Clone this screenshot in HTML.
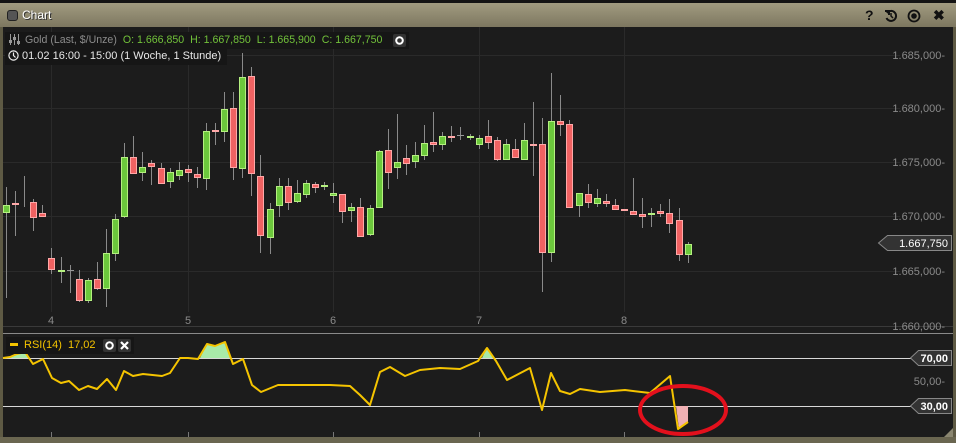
<!DOCTYPE html>
<html><head><meta charset="utf-8"><style>
*{margin:0;padding:0}
body{width:956px;height:443px;background:#1c1c1c;overflow:hidden;position:relative;font-family:"Liberation Sans",sans-serif}
#tb{position:absolute;left:0;top:3px;width:956px;height:24px;background:linear-gradient(#a19b80,#7d7760)}
#top{position:absolute;left:0;top:0;width:956px;height:3px;background:#141414}
#tb .cb{position:absolute;left:7px;top:7px;width:9px;height:9px;border:1px solid #222;border-radius:3px;background:#555}
#tb .t{position:absolute;left:22px;top:5px;font-size:12px;color:#fff;text-shadow:1px 1px 0 #333}
#tb .ic{position:absolute;top:4px;font-size:14px;font-weight:bold;color:#111}
svg{position:absolute;left:0;top:0}
.info{position:absolute;background:#161616;font-size:11px;height:17px;line-height:17px;white-space:nowrap}
.btn{position:absolute;width:13px;height:13px;background:#333;border-radius:2px}
.g{color:#72c23a;margin-left:6px}
</style></head><body>
<div id="top"></div>
<div id="tb"><div class="cb"></div><div class="t">Chart</div>
<div class="ic" style="left:865px">?</div>
<svg style="left:884px;top:6px" width="14" height="14" viewBox="0 0 14 14"><path d="M3 4 A5 5 0 1 1 2.5 9" fill="none" stroke="#111" stroke-width="2"/><path d="M1 2 L5 2 L5 6" fill="none" stroke="#111" stroke-width="2"/><path d="M7 4 V7 L9 9" fill="none" stroke="#111" stroke-width="1.5"/></svg>
<svg style="left:907px;top:6px" width="14" height="14" viewBox="0 0 14 14"><circle cx="7" cy="7" r="5.5" fill="none" stroke="#111" stroke-width="1.8"/><circle cx="7" cy="7" r="2.8" fill="#111"/></svg>
<div class="ic" style="left:933px">&#x2716;</div>
</div>
<svg width="956" height="443" viewBox="0 0 956 443">
<rect x="0" y="27" width="3" height="416" fill="#5e5a44"/>
<rect x="953" y="27" width="3" height="416" fill="#5e5a44"/>
<rect x="0" y="437" width="956" height="6" fill="#6a6650"/>
<g stroke="#2a2a2a" stroke-width="1">
<line x1="3" y1="55.5" x2="900" y2="55.5"/><line x1="3" y1="108.5" x2="900" y2="108.5"/><line x1="3" y1="162.5" x2="900" y2="162.5"/><line x1="3" y1="216.5" x2="900" y2="216.5"/><line x1="3" y1="271.5" x2="900" y2="271.5"/>
<line x1="51.5" y1="27" x2="51.5" y2="312"/><line x1="188.5" y1="27" x2="188.5" y2="312"/><line x1="333.5" y1="27" x2="333.5" y2="312"/><line x1="479.5" y1="27" x2="479.5" y2="312"/><line x1="624.5" y1="27" x2="624.5" y2="312"/>
</g>
<line x1="3" y1="326.5" x2="953" y2="326.5" stroke="#3a3a3a"/>
<line x1="3" y1="333.5" x2="953" y2="333.5" stroke="#8a8a8a"/>
<g fill="#8a8a8a" font-size="11" text-anchor="end">
<text x="945" y="59">1.685,000-</text><text x="945" y="112">1.680,000-</text><text x="945" y="166">1.675,000-</text><text x="945" y="220">1.670,000-</text><text x="945" y="275">1.665,000-</text><text x="945" y="330">1.660,000-</text>
<text x="945" y="385">50,00-</text>
</g>
<g fill="#8a8a8a" font-size="11" text-anchor="middle"><text x="51" y="324">4</text><text x="188" y="324">5</text><text x="333" y="324">6</text><text x="479" y="324">7</text><text x="624" y="324">8</text></g>
<g stroke="#777"><line x1="51.5" y1="432" x2="51.5" y2="437"/><line x1="188.5" y1="432" x2="188.5" y2="437"/><line x1="333.5" y1="432" x2="333.5" y2="437"/><line x1="479.5" y1="432" x2="479.5" y2="437"/><line x1="624.5" y1="432" x2="624.5" y2="437"/></g>
<g stroke="#8a8a8a" stroke-width="1">
<line x1="6.5" y1="187" x2="6.5" y2="298"/><line x1="15.5" y1="191" x2="15.5" y2="236"/><line x1="24.5" y1="176" x2="24.5" y2="207"/><line x1="33.5" y1="199" x2="33.5" y2="231"/><line x1="42.5" y1="205" x2="42.5" y2="216"/><line x1="51.5" y1="248" x2="51.5" y2="274"/><line x1="61.5" y1="257" x2="61.5" y2="283"/><line x1="70.5" y1="265" x2="70.5" y2="293"/><line x1="79.5" y1="270" x2="79.5" y2="302"/><line x1="88.5" y1="278" x2="88.5" y2="303"/><line x1="97.5" y1="262" x2="97.5" y2="290"/><line x1="106.5" y1="229" x2="106.5" y2="307"/><line x1="115.5" y1="214" x2="115.5" y2="261"/><line x1="124.5" y1="143" x2="124.5" y2="218"/><line x1="133.5" y1="136" x2="133.5" y2="174"/><line x1="142.5" y1="152" x2="142.5" y2="181"/><line x1="151.5" y1="160" x2="151.5" y2="185"/><line x1="161.5" y1="163" x2="161.5" y2="183"/><line x1="170.5" y1="168" x2="170.5" y2="188"/><line x1="179.5" y1="162" x2="179.5" y2="180"/><line x1="188.5" y1="165" x2="188.5" y2="182"/><line x1="197.5" y1="167" x2="197.5" y2="188"/><line x1="206.5" y1="123" x2="206.5" y2="190"/><line x1="215.5" y1="123" x2="215.5" y2="145"/><line x1="224.5" y1="92" x2="224.5" y2="142"/><line x1="233.5" y1="92" x2="233.5" y2="180"/><line x1="242.5" y1="53" x2="242.5" y2="178"/><line x1="251.5" y1="67" x2="251.5" y2="196"/><line x1="260.5" y1="155" x2="260.5" y2="253"/><line x1="270.5" y1="203" x2="270.5" y2="254"/><line x1="279.5" y1="178" x2="279.5" y2="217"/><line x1="288.5" y1="178" x2="288.5" y2="210"/><line x1="297.5" y1="180" x2="297.5" y2="203"/><line x1="306.5" y1="180" x2="306.5" y2="198"/><line x1="315.5" y1="182" x2="315.5" y2="193"/><line x1="324.5" y1="182" x2="324.5" y2="190"/><line x1="333.5" y1="183" x2="333.5" y2="203"/><line x1="342.5" y1="194" x2="342.5" y2="223"/><line x1="351.5" y1="203" x2="351.5" y2="222"/><line x1="360.5" y1="198" x2="360.5" y2="237"/><line x1="370.5" y1="205" x2="370.5" y2="236"/><line x1="379.5" y1="150" x2="379.5" y2="208"/><line x1="388.5" y1="129" x2="388.5" y2="189"/><line x1="397.5" y1="114" x2="397.5" y2="179"/><line x1="406.5" y1="145" x2="406.5" y2="175"/><line x1="415.5" y1="142" x2="415.5" y2="168"/><line x1="424.5" y1="125" x2="424.5" y2="160"/><line x1="433.5" y1="112" x2="433.5" y2="152"/><line x1="442.5" y1="132" x2="442.5" y2="150"/><line x1="451.5" y1="126" x2="451.5" y2="142"/><line x1="460.5" y1="127" x2="460.5" y2="140"/><line x1="470.5" y1="134" x2="470.5" y2="140"/><line x1="479.5" y1="135" x2="479.5" y2="149"/><line x1="488.5" y1="120" x2="488.5" y2="149"/><line x1="497.5" y1="137" x2="497.5" y2="161"/><line x1="506.5" y1="139" x2="506.5" y2="160"/><line x1="515.5" y1="139" x2="515.5" y2="158"/><line x1="524.5" y1="123" x2="524.5" y2="160"/><line x1="533.5" y1="102" x2="533.5" y2="176"/><line x1="542.5" y1="118" x2="542.5" y2="292"/><line x1="551.5" y1="73" x2="551.5" y2="262"/><line x1="560.5" y1="95" x2="560.5" y2="136"/><line x1="569.5" y1="120" x2="569.5" y2="207"/><line x1="579.5" y1="193" x2="579.5" y2="217"/><line x1="588.5" y1="184" x2="588.5" y2="208"/><line x1="597.5" y1="189" x2="597.5" y2="207"/><line x1="606.5" y1="194" x2="606.5" y2="207"/><line x1="615.5" y1="199" x2="615.5" y2="210"/><line x1="633.5" y1="178" x2="633.5" y2="214"/><line x1="642.5" y1="198" x2="642.5" y2="228"/><line x1="651.5" y1="208" x2="651.5" y2="227"/><line x1="660.5" y1="204" x2="660.5" y2="217"/><line x1="669.5" y1="199" x2="669.5" y2="233"/><line x1="679.5" y1="208" x2="679.5" y2="261"/><line x1="688.5" y1="242" x2="688.5" y2="263"/>
</g>
<g fill="#6cc83c" stroke="#b5f080" stroke-width="1">
<rect x="3.5" y="205.5" width="6" height="7"/><rect x="58.5" y="270.5" width="6" height="1"/><rect x="85.5" y="280.5" width="6" height="20"/><rect x="103.5" y="253.5" width="6" height="35"/><rect x="112.5" y="219.5" width="6" height="34"/><rect x="121.5" y="157.5" width="6" height="59"/><rect x="139.5" y="167.5" width="6" height="5"/><rect x="167.5" y="172.5" width="6" height="9"/><rect x="176.5" y="170.5" width="6" height="5"/><rect x="203.5" y="131.5" width="6" height="47"/><rect x="221.5" y="109.5" width="6" height="22"/><rect x="239.5" y="77.5" width="6" height="91"/><rect x="267.5" y="209.5" width="6" height="28"/><rect x="276.5" y="186.5" width="6" height="19"/><rect x="294.5" y="193.5" width="6" height="8"/><rect x="303.5" y="183.5" width="6" height="11"/><rect x="321.5" y="185.5" width="6" height="1"/><rect x="330.5" y="193.5" width="6" height="2"/><rect x="348.5" y="207.5" width="6" height="3"/><rect x="367.5" y="208.5" width="6" height="26"/><rect x="376.5" y="151.5" width="6" height="56"/><rect x="394.5" y="162.5" width="6" height="5"/><rect x="412.5" y="155.5" width="6" height="6"/><rect x="421.5" y="143.5" width="6" height="12"/><rect x="439.5" y="136.5" width="6" height="8"/><rect x="467.5" y="136.5" width="6" height="1"/><rect x="476.5" y="138.5" width="6" height="6"/><rect x="503.5" y="144.5" width="6" height="15"/><rect x="521.5" y="140.5" width="6" height="19"/><rect x="548.5" y="121.5" width="6" height="131"/><rect x="576.5" y="193.5" width="6" height="12"/><rect x="594.5" y="198.5" width="6" height="5"/><rect x="648.5" y="213.5" width="6" height="1"/><rect x="685.5" y="244.5" width="6" height="10"/>
</g>
<g fill="#f06262" stroke="#ffa8a8" stroke-width="1">
<rect x="12.5" y="203.5" width="6" height="1"/><rect x="30.5" y="202.5" width="6" height="15"/><rect x="39.5" y="213.5" width="6" height="3"/><rect x="48.5" y="258.5" width="6" height="11"/><rect x="76.5" y="279.5" width="6" height="21"/><rect x="94.5" y="279.5" width="6" height="9"/><rect x="130.5" y="157.5" width="6" height="16"/><rect x="148.5" y="163.5" width="6" height="3"/><rect x="158.5" y="168.5" width="6" height="15"/><rect x="185.5" y="169.5" width="6" height="3"/><rect x="194.5" y="174.5" width="6" height="3"/><rect x="212.5" y="130.5" width="6" height="1"/><rect x="230.5" y="108.5" width="6" height="59"/><rect x="248.5" y="76.5" width="6" height="97"/><rect x="257.5" y="176.5" width="6" height="59"/><rect x="285.5" y="186.5" width="6" height="16"/><rect x="312.5" y="184.5" width="6" height="3"/><rect x="339.5" y="194.5" width="6" height="17"/><rect x="357.5" y="207.5" width="6" height="29"/><rect x="385.5" y="150.5" width="6" height="22"/><rect x="403.5" y="158.5" width="6" height="5"/><rect x="430.5" y="142.5" width="6" height="2"/><rect x="448.5" y="136.5" width="6" height="1"/><rect x="485.5" y="136.5" width="6" height="6"/><rect x="494.5" y="140.5" width="6" height="19"/><rect x="512.5" y="149.5" width="6" height="8"/><rect x="530.5" y="144.5" width="6" height="1"/><rect x="539.5" y="144.5" width="6" height="108"/><rect x="557.5" y="121.5" width="6" height="3"/><rect x="566.5" y="124.5" width="6" height="83"/><rect x="585.5" y="194.5" width="6" height="8"/><rect x="603.5" y="201.5" width="6" height="2"/><rect x="612.5" y="205.5" width="6" height="4"/><rect x="621.5" y="209.5" width="6" height="1"/><rect x="630.5" y="211.5" width="6" height="3"/><rect x="639.5" y="214.5" width="6" height="2"/><rect x="657.5" y="211.5" width="6" height="2"/><rect x="666.5" y="213.5" width="6" height="10"/><rect x="676.5" y="220.5" width="6" height="34"/>
</g>
<rect x="67" y="270" width="7" height="1" fill="#999"/><rect x="457" y="135" width="7" height="1" fill="#999"/>
<g fill="#333" stroke="#888"><path d="M878.5 243 L887.5 235.5 H951.5 V250.5 H887.5 Z"/></g>
<text x="948" y="247" fill="#fff" font-size="11" text-anchor="end">1.667,750</text>
<line x1="3" y1="358.5" x2="912" y2="358.5" stroke="#d8d8d8"/>
<line x1="3" y1="406.5" x2="912" y2="406.5" stroke="#d8d8d8"/>
<g fill="#333" stroke="#888"><path d="M910.5 358 L918.5 350.5 H951.5 V365.5 H918.5 Z"/><path d="M910.5 406 L918.5 398.5 H951.5 V413.5 H918.5 Z"/></g>
<g fill="#fff" font-size="11" font-weight="bold" text-anchor="end"><text x="948" y="362">70,00</text><text x="948" y="410">30,00</text></g>
<g fill="#a8eaa8"><path d="M10 358 L17 354 L25 352 L30 358 Z"/><path d="M200 358 L207 344 L215 346 L225 342 L230 358 Z"/><path d="M482 358 L487 348 L493 358 Z"/></g>
<path d="M676 406 L679 429 L688 422 L688 406 Z" fill="#f0b0b4"/>
<polyline fill="none" stroke="#f5c400" stroke-width="2" stroke-linejoin="round" points="3,358 10,357 17,354 25,352 33,364 43,359 52,378 61,383 69,381 79,390 88,386 97,389 107,379 116,390 124,371 133,376 143,374 162,376 170,373 180,358 188,358 198,359 207,344 215,346 225,342 233,364 243,359 252,385 261,392 278,385 300,385 330,385 350,386 360,395 370,405 380,372 390,367 405,376 420,370 440,368 460,369 478,361 487,348 496,361 507,380 530,368 542,410 551,373 560,391 570,394 580,389 600,392 625,390 650,393 670,376 678,429 688,422"/>
<ellipse cx="683" cy="410" rx="43" ry="24" fill="none" stroke="#e3101c" stroke-width="4"/>
<path d="M944 437 L953 428 V437 Z" fill="#8a8670"/>
</svg>
<div class="info" style="left:5px;top:32px;width:404px;color:#8c8c8c;font-size:10.6px"><svg style="position:relative;display:inline-block;vertical-align:middle;margin:0 4px 2px 3px" width="13" height="11" viewBox="0 0 13 11"><g stroke="#999" stroke-width="1"><line x1="2.5" y1="0" x2="2.5" y2="11"/><line x1="6.5" y1="0" x2="6.5" y2="11"/><line x1="10.5" y1="0" x2="10.5" y2="11"/></g><g fill="#999"><rect x="1" y="6" width="3" height="3"/><rect x="5" y="3" width="3" height="3"/><rect x="9" y="7" width="3" height="3"/></g></svg>Gold (Last, $/Unze)<span class="g">O: 1.666,850</span><span class="g">H: 1.667,850</span><span class="g">L: 1.665,900</span><span class="g">C: 1.667,750</span></div>
<div class="btn" style="left:393px;top:34px"><svg width="13" height="13" viewBox="0 0 13 13"><circle cx="6.5" cy="6.5" r="3.3" fill="none" stroke="#fff" stroke-width="2"/></svg></div>
<div class="info" style="left:5px;top:48px;width:222px;color:#e8e8e8"><svg style="position:relative;display:inline-block;vertical-align:middle;margin:0 3px 2px 3px" width="11" height="11" viewBox="0 0 11 11"><circle cx="5.5" cy="5.5" r="4.6" fill="none" stroke="#eee" stroke-width="1.2"/><path d="M5.5 2.5 V5.5 L7.5 7.5" fill="none" stroke="#eee" stroke-width="1.2"/></svg>01.02 16:00 - 15:00 (1 Woche, 1 Stunde)</div>
<div class="info" style="left:6px;top:337px;width:128px;color:#f5c400"><span style="display:inline-block;width:8px;height:3px;background:#f5c400;margin:0 6px 2px 4px;vertical-align:middle"></span>RSI(14) &nbsp;17,02</div>
<div class="btn" style="left:103px;top:339px"><svg width="13" height="13" viewBox="0 0 13 13"><circle cx="6.5" cy="6.5" r="3.3" fill="none" stroke="#fff" stroke-width="2"/></svg></div>
<div class="btn" style="left:118px;top:339px"><svg width="13" height="13" viewBox="0 0 13 13"><path d="M3 3 L10 10 M10 3 L3 10" stroke="#fff" stroke-width="2.2"/></svg></div>
</body></html>
